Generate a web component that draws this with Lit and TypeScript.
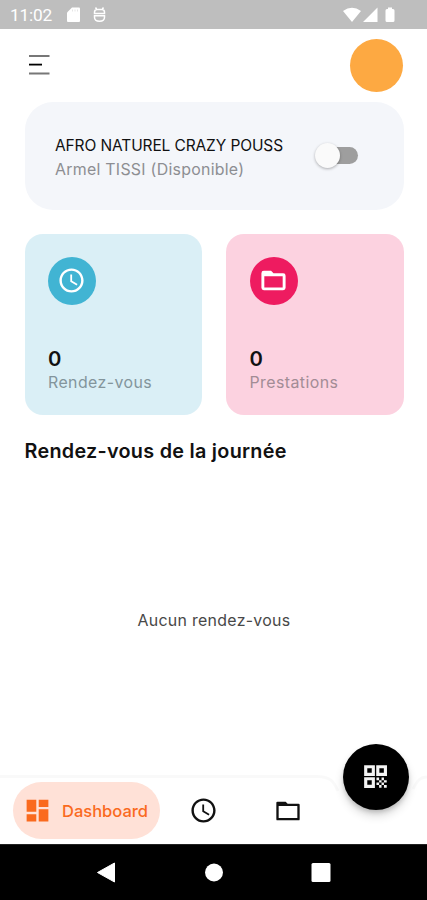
import { LitElement, html, css, svg } from "lit";
import { customElement } from "lit/decorators.js";

const clockPath = svg`<path d="M11.99 2C6.47 2 2 6.48 2 12s4.47 10 9.99 10C17.52 22 22 17.52 22 12S17.52 2 11.99 2zM12 20c-4.42 0-8-3.58-8-8s3.58-8 8-8 8 3.58 8 8-3.58 8-8 8zm.5-13H11v6l5.25 3.15.75-1.23-4.5-2.67z"/>`;

@customElement("app-root")
export class AppRoot extends LitElement {
  static styles = css`
    :host {
      display: flex;
      flex-direction: column;
      width: 427px;
      height: 900px;
      background: #fff;
      overflow: hidden;
      font-family: Inter, "Open Sans", sans-serif;
      color: #111;
    }
    * { box-sizing: border-box; }
    svg { display: block; flex: none; fill: currentColor; }
    .status {
      height: 28.5px;
      flex: none;
      background: #bebebe;
      color: #fff;
      display: flex;
      align-items: center;
      padding: 2px 31px 0 10px;
    }
    .time { font: 400 17.3px/20px Roboto, sans-serif; width: 57px; letter-spacing: -0.2px; }
    .grow { flex: 1; }
    .sd { margin-right: 13px; }
    .header {
      flex: none;
      display: flex;
      align-items: center;
      justify-content: space-between;
      height: 73.5px;
      padding: 0 24px 0 29px;
    }
    .avatar { width: 53px; height: 53px; border-radius: 50%; background: #fda942; }
    .content { flex: 1; padding: 0 23.5px 0 24.5px; display: flex; flex-direction: column; }
    .shop {
      height: 107.5px;
      flex: none;
      border-radius: 28px;
      background: #f4f6fa;
      display: flex;
      align-items: center;
      justify-content: space-between;
      padding: 4px 46px 0 30.5px;
    }
    .shop-text { white-space: nowrap; }
    .name { font-size: 15.5px; line-height: 23.5px; letter-spacing: -0.12px; }
    .person { font-size: 15.9px; line-height: 23.5px; color: #8d8e92; letter-spacing: 0.27px; }
    .switch { width: 43px; height: 25px; margin-top: -4px; display: flex; align-items: center; position: relative; }
    .track { margin-left: 8px; width: 35px; height: 17px; border-radius: 9px; background: #9e9e9e; }
    .thumb {
      position: absolute;
      left: 0;
      top: 0;
      width: 25px;
      height: 25px;
      border-radius: 50%;
      background: #fafafa;
      box-shadow: 0 1px 3px rgba(0, 0, 0, 0.3);
    }
    .stats { flex: none; display: grid; grid-template-columns: 1fr 1fr; gap: 24px; margin-top: 24.5px; }
    .stat { height: 181px; border-radius: 18px; padding: 23px 23.5px 0; display: flex; flex-direction: column; }
    .blue { background: #daeff6; }
    .pink { background: #fcd2e0; }
    .disc { flex: none; width: 48px; height: 48px; border-radius: 50%; display: flex; align-items: center; justify-content: center; color: #fff; }
    .disc svg { margin-top: -1px; margin-right: 1px; }
    .blue .disc { background: #41b4d3; }
    .pink .disc { background: #ee1b60; }
    .count { margin-top: 42px; font-size: 20.3px; line-height: 24px; font-weight: 600; }
    .label { font-size: 15.9px; line-height: 24px; letter-spacing: 0.43px; color: #83959c; }
    .pink .label { color: #a28c95; }
    h2 { margin: 23px 0 0; font-size: 19.8px; line-height: 26px; font-weight: 600; letter-spacing: 0.28px; white-space: nowrap; }
    .empty {
      margin-top: 145px;
      text-align: center;
      font-size: 15.9px;
      line-height: 24px;
      letter-spacing: 0.3px;
      color: #484848;
    }
    .bottom { flex: none; height: 68px; position: relative; }
    .shape { position: absolute; left: 0; top: -6px; }
    .items { position: relative; display: flex; align-items: center; padding: 6px 0 0 12.5px; }
    .active {
      width: 147.5px;
      height: 57px;
      border-radius: 29px;
      background: #ffe1d7;
      color: #fa6a1e;
      display: flex;
      align-items: center;
      padding-left: 10.5px;
      font-size: 16.5px;
      font-weight: 500;
    }
    .active span { margin-left: 10px; }
    .clock { margin-left: 28.5px; }
    .folder { margin-left: 56px; }
    .fab {
      position: absolute;
      left: 342.5px;
      top: -32.5px;
      width: 66px;
      height: 66px;
      border-radius: 50%;
      background: #000;
      color: #f4f4f4;
      display: grid;
      place-items: center;
      box-shadow: 0 3px 5px -1px rgba(0, 0, 0, 0.2), 0 6px 10px rgba(0, 0, 0, 0.14);
    }
    .system { flex: none; height: 56px; background: #000; border-top: 1px solid #222; }
  `;

  render() {
    return html`
      <div class="status">
        <div class="time">11:02</div>
        <svg class="sd" width="13" height="16" viewBox="0 0 13 16"><path d="M5 .5h7a1 1 0 0 1 1 1v12.500a1 1 0 0 1-1 1H1a1 1 0 0 1-1-1V5.500z"/><path fill="#bebebe" opacity=".4" d="M5 2.500h1v2H5zM7.500 2.500h1v2h-1zM10 2.500h1v2h-1z"/></svg>
        <svg width="13" height="16" viewBox="0 0 13 16"><path fill="none" stroke="#fff" stroke-width="1.500" d="M2.500 .5l1 1.500M10.500 .5l-1 1.500M1.500 6.500V5.300Q1.500 2.500 4 2.500h5q2.500 0 2.500 2.800v1.200zM1.500 8.800h10v1.500q0 4-5 4t-5-4z"/></svg>
        <div class="grow"></div>
        <svg width="53" height="18" viewBox="0 0 53 18"><path d="M0 5Q9 -1.500 18 5L9 16zM34.500 1.500V16H20zM42.500 4.500q0-1.500 1.500-1.500H45V1.500h4v1.500h1q1.500 0 1.500 1.500v10q0 1.500-1.500 1.500h-6q-1.500 0-1.500-1.500z"/></svg>
      </div>
      <div class="header">
        <svg width="21" height="20" viewBox="0 0 21 20"><path fill="#777" d="M0 0h20.500v2H0zM0 17.500h20.500v2H0z"/><path fill="#000" d="M0 8.700h13v1.800H0z"/></svg>
        <div class="avatar"></div>
      </div>
      <div class="content">
        <div class="shop">
          <div class="shop-text">
            <div class="name">AFRO NATUREL CRAZY POUSS</div>
            <div class="person">Armel TISSI (Disponible)</div>
          </div>
          <div class="switch"><div class="track"></div><div class="thumb"></div></div>
        </div>
        <div class="stats">
          <div class="stat blue">
            <div class="disc"><svg width="29" height="29" viewBox="0 0 24 24">${clockPath}</svg></div>
            <div class="count">0</div>
            <div class="label">Rendez-vous</div>
          </div>
          <div class="stat pink">
            <div class="disc"><svg width="29" height="29" viewBox="0 0 24 24"><path fill-rule="evenodd" d="M4 4h6l2 2h8q2 0 2 2v10q0 2-2 2H4q-2 0-2-2V6q0-2 2-2zM4.400 8.400v9.300h15.200V8.400z"/></svg></div>
            <div class="count">0</div>
            <div class="label">Prestations</div>
          </div>
        </div>
        <h2>Rendez-vous de la journée</h2>
        <div class="empty">Aucun rendez-vous</div>
      </div>
      <div class="bottom">
        <svg class="shape" width="427" height="74" viewBox="0 0 427 74">
          <path fill="none" stroke="#000" stroke-opacity=".025" stroke-width="3" d="M0 6.500H317C331 6.500 334 12 338 21"/>
          <path fill="none" stroke="#000" stroke-opacity=".025" stroke-width="3" d="M413 19C417 11 420 7 427 7"/>
        </svg>
        <div class="items">
          <div class="active">
            <svg width="29" height="29" viewBox="0 0 24 24"><path d="M3 13h8V3H3v10zm0 8h8v-6H3v6zm10 0h8V11h-8v10zm0-18v6h8V3h-8z"/></svg>
            <span>Dashboard</span>
          </div>
          <svg class="clock" width="29" height="29" viewBox="0 0 24 24">${clockPath}</svg>
          <svg class="folder" width="28" height="28" viewBox="0 0 24 24"><path fill-rule="evenodd" d="M3 4H10l1.700 1.700h9.300q1 0 1 1v12.300q0 1-1 1h-18q-1 0-1-1v-14q0-1 1-1zM4 7.700v10.300h16V7.700z"/></svg>
        </div>
        <div class="fab">
          <svg width="29" height="29" viewBox="0 0 24 24"><path fill-rule="evenodd" d="M2.600 2.600h8.900v8.900H2.600zM5.200 5.200v3.700h3.700V5.200zM2.600 12.600h8.900v8.900H2.600zM5.200 15.200v3.700h3.700v-3.700zM12.600 2.600h8.900v8.900h-8.900zM15.200 5.200v3.700h3.700V5.200z"/><path d="M19 19h2.300v2.300H19zM12.800 12.800H15v2.200h-2.200zM15 15h2v2h-2zM12.800 17H15v2h-2.200zM15 19h2v2.300h-2zM17 17h2v2h-2zM17 12.800h2V15h-2zM19 15h2.300v2H19z"/></svg>
        </div>
      </div>
      <div class="system">
        <svg width="427" height="55" viewBox="0 0 427 55"><path fill="#fff" stroke="#fff" stroke-width="1" stroke-linejoin="round" d="M97.500 27.500L114.500 18v19z"/><circle cx="214" cy="27.500" r="9" fill="#fff"/><rect x="311.500" y="18" width="19" height="19" rx="1.500" fill="#fff"/></svg>
      </div>
    `;
  }
}
